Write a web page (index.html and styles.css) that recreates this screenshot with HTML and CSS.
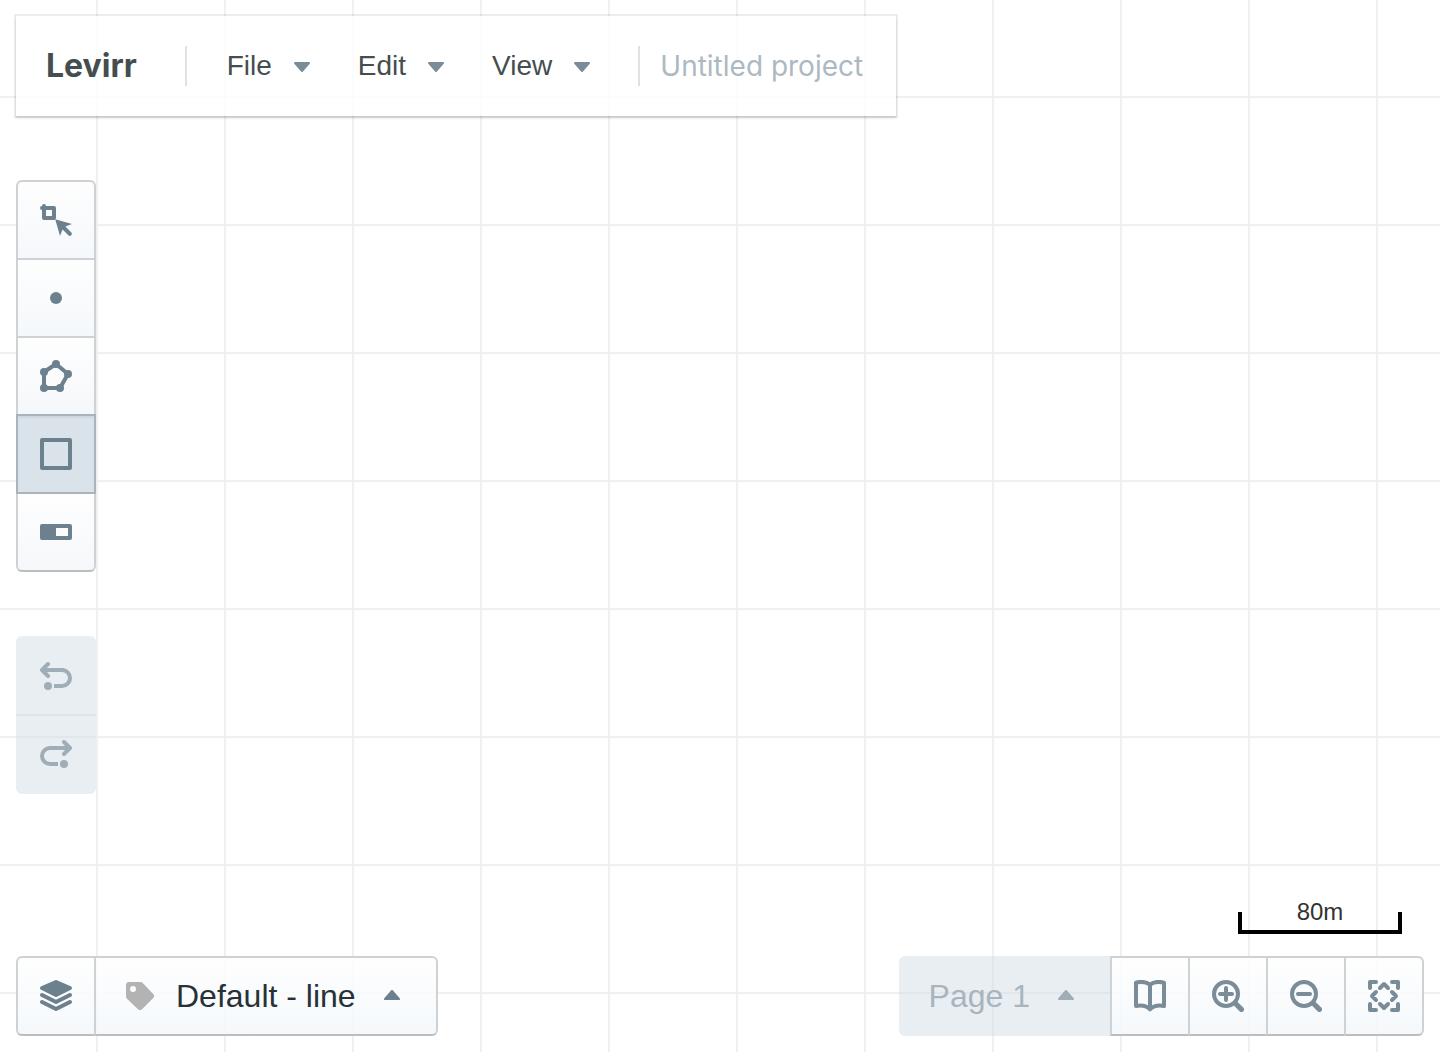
FILE: index.html
```html
<!DOCTYPE html>
<html lang="en">

<head>
	<meta charset="UTF-8" />
	<meta name="viewport" content="width=device-width, initial-scale=1.0" />
	<title>Levirr</title>
	<link rel="stylesheet" href="styles.css">
</head>

<body>

	<header class="navbar">
		<h1 class="brand">Levirr</h1>
		<span class="divider"></span>
		<nav class="menus">
			<button class="menu-button" type="button">File
				<svg class="icon" viewBox="0 0 16 16"><path d="M12 6.5c0-.28-.22-.5-.5-.5h-7a.495.495 0 00-.37.83l3.5 4c.09.1.22.17.37.17s.28-.07.37-.17l3.5-4c.08-.09.13-.2.13-.33z" /></svg>
			</button>
			<button class="menu-button" type="button">Edit
				<svg class="icon" viewBox="0 0 16 16"><path d="M12 6.5c0-.28-.22-.5-.5-.5h-7a.495.495 0 00-.37.83l3.5 4c.09.1.22.17.37.17s.28-.07.37-.17l3.5-4c.08-.09.13-.2.13-.33z" /></svg>
			</button>
			<button class="menu-button" type="button">View
				<svg class="icon" viewBox="0 0 16 16"><path d="M12 6.5c0-.28-.22-.5-.5-.5h-7a.495.495 0 00-.37.83l3.5 4c.09.1.22.17.37.17s.28-.07.37-.17l3.5-4c.08-.09.13-.2.13-.33z" /></svg>
			</button>
		</nav>
		<span class="divider"></span>
		<input class="project-name" type="text" placeholder="Untitled project" aria-label="Project name">
	</header>

	<div class="group vertical tools">
		<button class="btn" type="button" aria-label="Select">
			<svg class="icon" viewBox="0 0 16 16">
				<path class="line" d="M2 1v6h5V2H1" />
				<path d="M7.6 7.6L16 10l-3.3 1.3 3 3a1 1 0 01-1.4 1.4l-3-3L10 16z" />
			</svg>
		</button>
		<button class="btn" type="button" aria-label="Point">
			<svg class="icon" viewBox="0 0 16 16"><circle cx="8" cy="8" r="3" /></svg>
		</button>
		<button class="btn" type="button" aria-label="Polygon">
			<svg class="icon" viewBox="0 0 16 16">
				<path class="line" d="M8 2l6 5-4 7H2V6z" />
				<circle cx="8" cy="2" r="2" />
				<circle cx="14" cy="7" r="2" />
				<circle cx="10" cy="14" r="2" />
				<circle cx="2" cy="14" r="2" />
				<circle cx="2" cy="6" r="2" />
			</svg>
		</button>
		<button class="btn active" type="button" aria-label="Rectangle" aria-pressed="true">
			<svg class="icon" viewBox="0 0 16 16"><path class="line" d="M1 1h14v14H1z" /></svg>
		</button>
		<button class="btn" type="button" aria-label="Segment">
			<svg class="icon" viewBox="0 0 16 16"><path fill-rule="evenodd" d="M1 4h14a1 1 0 011 1v6a1 1 0 01-1 1H1a1 1 0 01-1-1V5a1 1 0 011-1zm7 2v4h6V6z" /></svg>
		</button>
	</div>

	<div class="group vertical history">
		<button class="btn" type="button" aria-label="Undo" disabled>
			<svg class="icon" viewBox="0 0 16 16">
				<path class="line" d="M4 2L1 5l3 3M1 5h10" />
				<path class="line butt" d="M10 5h1a4 4 0 010 8H7" />
				<circle cx="4" cy="13" r="2" />
			</svg>
		</button>
		<button class="btn" type="button" aria-label="Redo" disabled>
			<svg class="icon" viewBox="0 0 16 16">
				<path class="line" d="M12 2l3 3-3 3m3-3H5" />
				<path class="line butt" d="M6 5H5a4 4 0 000 8h4" />
				<circle cx="12" cy="13" r="2" />
			</svg>
		</button>
	</div>

	<footer class="bottom">
		<div class="group">
			<button class="btn" type="button" aria-label="Layers">
				<svg class="icon" viewBox="0 0 16 16"><path d="M.55 4.89l7 3.5c.14.07.29.11.45.11s.31-.04.45-.11l7-3.5a.998.998 0 00-.06-1.81L8.4.08a1.006 1.006 0 00-.79 0l-6.99 3a.992.992 0 00-.07 1.81zM15 10c-.16 0-.31.04-.45.11L8 13.38l-6.55-3.27c-.14-.07-.29-.11-.45-.11-.55 0-1 .45-1 1 0 .39.23.73.55.89l7 3.5c.14.07.29.11.45.11s.31-.04.45-.11l7-3.5c.32-.16.55-.5.55-.89 0-.55-.45-1-1-1zm0-3.5c-.16 0-.31.04-.45.11L8 9.88 1.45 6.61C1.31 6.54 1.16 6.5 1 6.5c-.55 0-1 .45-1 1 0 .39.23.73.55.89l7 3.5c.14.07.29.11.45.11s.31-.04.45-.11l7-3.5c.32-.16.55-.5.55-.89 0-.55-.45-1-1-1z" /></svg>
			</button>
			<button class="btn" type="button">
				<svg class="icon tag" viewBox="0 0 16 16"><path fill-rule="evenodd" d="M1 2.5A1.5 1.5 0 012.5 1h5.6a2 2 0 011.4.6L14.6 7a1.4 1.4 0 010 2L9 14.6a1.4 1.4 0 01-2 0L1.6 9.5A2 2 0 011 8.1zM4.500 3a1.5 1.5 0 100 3 1.5 1.5 0 000-3z" /></svg>
				Default - line
				<svg class="icon" viewBox="0 0 16 16"><path d="M11.87 9.17l-3.5-4C8.28 5.07 8.15 5 8 5s-.28.07-.37.17l-3.5 4a.495.495 0 00.37.83h7a.495.495 0 00.37-.83z" /></svg>
			</button>
		</div>

		<div class="view-controls">
			<div class="scale">
				<span class="scale-label">80m</span>
				<div class="scale-bar"></div>
			</div>
			<div class="group">
				<button class="btn" type="button" disabled>
					Page 1
					<svg class="icon" viewBox="0 0 16 16"><path d="M11.87 9.17l-3.5-4C8.28 5.07 8.15 5 8 5s-.28.07-.37.17l-3.5 4a.495.495 0 00.37.83h7a.495.495 0 00.37-.83z" /></svg>
				</button>
				<button class="btn" type="button" aria-label="Pages">
					<svg class="icon" viewBox="0 0 16 16"><path class="line" d="M8 2.3C6 .8 3.5.7 1 1.3V13c2.5-.5 5-.3 7 1.7 2-2 4.500-2.2 7-1.7V1.3C12.500.7 10 .8 8 2.3zv12" /></svg>
				</button>
				<button class="btn" type="button" aria-label="Zoom in">
					<svg class="icon" viewBox="0 0 16 16">
						<circle class="line" cx="7" cy="7" r="6" />
						<path class="line" d="M4 7h6M7 4v6" />
						<path class="line thick" d="M12 12l2.7 2.7" />
					</svg>
				</button>
				<button class="btn" type="button" aria-label="Zoom out">
					<svg class="icon" viewBox="0 0 16 16">
						<circle class="line" cx="7" cy="7" r="6" />
						<path class="line" d="M4 7h6" />
						<path class="line thick" d="M12 12l2.7 2.7" />
					</svg>
				</button>
				<button class="btn" type="button" aria-label="Zoom to fit">
					<svg class="icon" viewBox="0 0 16 16">
						<path class="line" d="M1 4V1h3M12 1h3v3M15 12v3h-3M4 15H1v-3" />
						<path class="line" d="M6 4l2-2 2 2M12 6l2 2-2 2M10 12l-2 2-2-2M4 10L2 8l2-2" />
					</svg>
				</button>
			</div>
		</div>
	</footer>

</body>

</html>
```

FILE: styles.css
```css
* {
	box-sizing: border-box;
	margin: 0;
	padding: 0;
}

body {
	font-family: "Liberation Sans", Arial, sans-serif;
	min-height: 100vh;
	padding: 16px;
	display: flex;
	flex-direction: column;
	align-items: flex-start;
	background-color: #fff;
	background-image:
		linear-gradient(to right, #f0f0f0 2px, transparent 2px),
		linear-gradient(to bottom, #f0f0f0 2px, transparent 2px);
	background-size: 128px 128px;
	background-position: 96px 96px;
}

button {
	font-family: inherit;
	border: none;
	cursor: pointer;
}

/* top bar */
.navbar {
	display: flex;
	align-items: center;
	min-height: 100px;
	padding: 0 30px;
	background: rgba(255, 255, 255, 0.8);
	box-shadow: 0 0 0 2px rgba(16, 22, 26, 0.08), 0 2px 2px rgba(16, 22, 26, 0.16);
}

.brand {
	font-family: Inter, sans-serif;
	font-size: 32px;
	line-height: 40px;
	font-weight: 700;
	color: #444d50;
	margin-right: 48px;
}

.divider {
	width: 2px;
	height: 40px;
	background: #e0e1e2;
}

.menus {
	display: flex;
	margin: 0 20px;
}

.menu-button {
	display: flex;
	align-items: center;
	gap: 14px;
	height: 60px;
	padding: 0 20px;
	background: none;
	font-size: 28px;
	color: #444d50;
}

.menu-button .icon {
	color: #7b8c99;
}

.project-name {
	width: 206px;
	height: 60px;
	margin-left: 20px;
	border: none;
	outline: none;
	background: none;
	font-family: Inter, sans-serif;
	font-size: 28px;
	color: #444d50;
}

.project-name::placeholder {
	color: #adb9c2;
	opacity: 1;
}

/* icons */
.icon {
	width: 32px;
	height: 32px;
	flex: none;
	fill: currentColor;
	color: #6c808e;
}

.icon .line {
	fill: none;
	stroke: currentColor;
	stroke-width: 2;
	stroke-linecap: round;
	stroke-linejoin: round;
}

.icon .butt {
	stroke-linecap: butt;
}

.icon .thick {
	stroke-width: 2.6;
}

.icon.tag {
	color: #b3b3b3;
}

/* button groups */
.group {
	display: flex;
}

.group.vertical {
	flex-direction: column;
	margin-top: 64px;
}

.btn {
	display: flex;
	align-items: center;
	justify-content: center;
	gap: 20px;
	min-width: 80px;
	height: 80px;
	padding: 0 28px;
	border: 2px solid #cfd2d4;
	border-bottom-color: #b9bec2;
	background: linear-gradient(to bottom, rgba(254, 254, 254, 0.85), rgba(244, 248, 251, 0.9));
	font-size: 32px;
	color: #263238;
}

.btn[aria-label] {
	padding: 0;
}

.btn + .btn {
	margin-left: -2px;
}

.vertical .btn + .btn {
	margin-left: 0;
	margin-top: -2px;
}

.btn:first-child {
	border-radius: 6px 0 0 6px;
}

.btn:last-child {
	border-radius: 0 6px 6px 0;
}

.vertical .btn:first-child {
	border-radius: 6px 6px 0 0;
}

.vertical .btn:last-child {
	border-radius: 0 0 6px 6px;
}

.tools .btn {
	background: linear-gradient(to bottom, #fefefe, #f5f8fb);
}

.tools .btn:not(:last-child) {
	border-bottom-color: #cfd2d4;
}

.tools .btn.active {
	z-index: 1;
	background: #dbe3ea;
	border-color: #aab4bd;
	box-shadow: inset 0 2px 2px rgba(16, 22, 26, 0.06);
}

.btn:disabled {
	border-color: transparent;
	background: rgba(204, 217, 226, 0.44);
	color: #a8b5be;
	cursor: not-allowed;
}

.btn:disabled .icon {
	color: #9fadb6;
}

/* footer */
.bottom {
	display: flex;
	justify-content: space-between;
	align-items: flex-end;
	width: 100%;
	margin-top: auto;
}

.view-controls {
	display: flex;
	flex-direction: column;
	align-items: flex-end;
	gap: 22px;
}

.view-controls .icon {
	color: #7b8c99;
}

.scale {
	width: 164px;
	margin-right: 22px;
	text-align: center;
}

.scale-label {
	display: block;
	font-size: 24px;
	line-height: 24px;
	color: #333;
}

.scale-bar {
	height: 22px;
	margin-top: -12px;
	border: 4px solid #000;
	border-top: none;
}
```
